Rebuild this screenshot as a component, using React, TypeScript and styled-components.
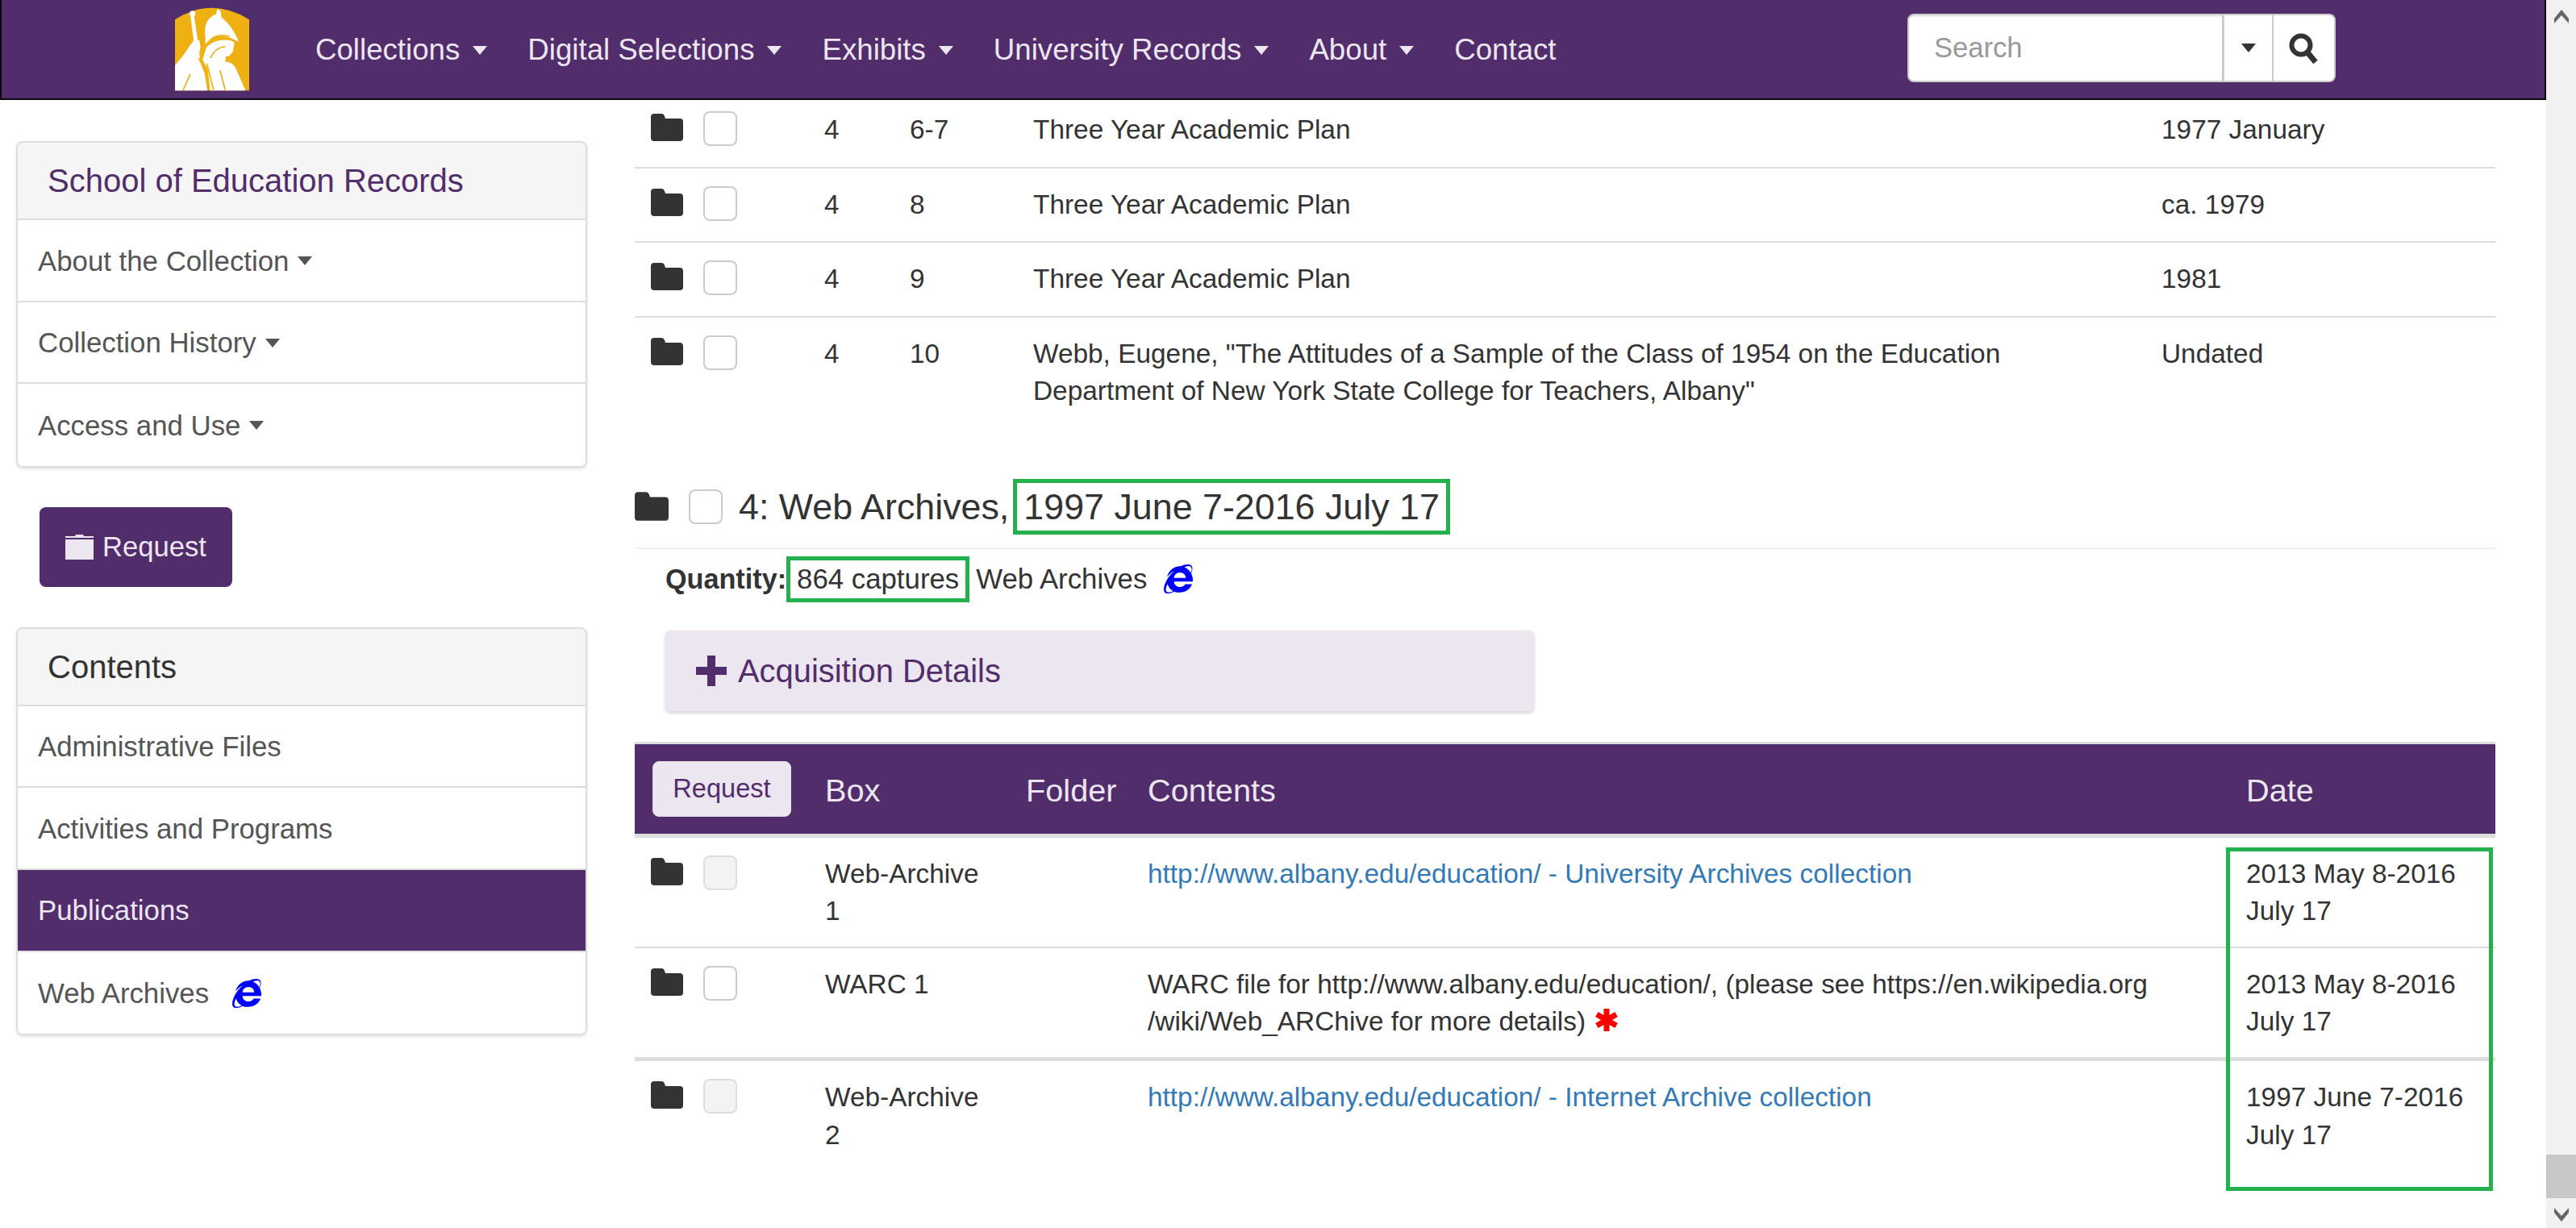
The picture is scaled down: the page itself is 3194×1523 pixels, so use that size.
import React from "react";
import styled, {createGlobalStyle} from "styled-components";
import {FaInternetExplorer} from "react-icons/fa";

const PURPLE = "#522d6b";
const LILAC = "#ebe6f0";
const LINE = "#dddddd";
const GREEN = "#22b14c";

const GlobalStyle = createGlobalStyle`
  html, body {
    margin: 0;
    height: 100%;
    overflow: hidden;
    background: #fff;
  }
  body {
    font-family: "Liberation Sans", Arial, sans-serif;
    font-size: 33.4px;
    line-height: 46.6px;
    color: #333;
  }
  * { box-sizing: border-box; }
`

const Screen = styled.div`
  display: flex;
  height: 1523px;
  overflow: hidden;
`
const Page = styled.div`
  flex: 1;
  min-width: 0;
  display: flex;
  flex-direction: column;
`
const Navbar = styled.nav`
  position: relative;
  z-index: 2;
  display: flex;
  align-items: flex-start;
  flex: none;
  height: 124px;
  background: ${PURPLE};
  border: 2px solid #0a0410;
  border-top: 0;
  padding-left: 215px;
`
const LogoBox = styled.div`
  width: 92px;
  height: 104px;
  margin-top: 9px;
  margin-right: 82px;
`
const NavMenu = styled.ul`
  display: flex;
  gap: 50px;
  list-style: none;
  margin: 0;
  padding: 37px 0 0;
  font-size: 36.67px;
  line-height: 50px;
  color: ${LILAC};
`
const NavItem = styled.li`
  display: flex;
  align-items: center;
`
const Caret = styled.span<{$color: string; $gap?: number}>`
  display: inline-block;
  width: 0;
  height: 0;
  margin-left: ${p => p.$gap ?? 16}px;
  border-left: 9.5px solid transparent;
  border-right: 9.5px solid transparent;
  border-top: 11px solid ${p => p.$color};
`
const SearchGroup = styled.div`
  display: flex;
  height: 85px;
  width: 531px;
  margin-left: auto;
  margin-right: 259px;
  margin-top: 17px;
  background: #fff;
  border: 2px solid #ccc;
  border-radius: 8px;
`
const SearchInput = styled.div`
  flex: 1;
  padding-left: 31px;
  font-size: 34.6px;
  line-height: 80px;
  color: #999;
  border-right: 3px solid #ccc;
  box-shadow: inset 0 2px 2px rgba(0, 0, 0, 0.08);
`
const SearchCaret = styled.div`
  width: 61px;
  display: flex;
  align-items: center;
  justify-content: center;
  border-right: 2px solid #ccc;
`
const SearchButton = styled.div`
  width: 75px;
  display: flex;
  align-items: center;
  justify-content: center;
`
const Columns = styled.div`
  flex: 1;
  display: flex;
  min-height: 0;
`
const Sidebar = styled.aside`
  flex: none;
  width: 708px;
  margin-left: 20px;
  padding-top: 51px;
  margin-right: 59px;
`
const Panel = styled.section`
  border: 2px solid ${LINE};
  border-radius: 8px;
  background: #fff;
  box-shadow: 0 2px 4px rgba(0, 0, 0, 0.1);
  overflow: hidden;
`
const PanelHeading = styled.h3<{$purple?: boolean}>`
  margin: 0;
  height: 96px;
  padding-left: 37px;
  background: #f5f5f5;
  font-size: 40px;
  line-height: 94px;
  font-weight: normal;
  color: ${p => (p.$purple ? PURPLE : "#333")};
  border-bottom: 2px solid ${LINE};
`
const PanelItem = styled.div<{$active?: boolean}>`
  display: flex;
  align-items: center;
  height: 101.6px;
  padding: 2px 0 0 25px;
  font-size: 34.8px;
  color: ${p => (p.$active ? LILAC : "#555")};
  background: ${p => (p.$active ? PURPLE : "#fff")};
  border-bottom: 2px solid ${LINE};
  &:last-child {
    border-bottom: 0;
  }
`
const SideRequest = styled.button`
  display: flex;
  align-items: center;
  gap: 11px;
  width: 239px;
  height: 99px;
  margin: 49px 0 50px 29px;
  padding: 0 0 0 32px;
  background: ${PURPLE};
  border: 0;
  border-radius: 8px;
  color: ${LILAC};
  font: inherit;
  font-size: 34.6px;
`
const IeIcon = styled(FaInternetExplorer)<{$gap: number}>`
  width: 36px;
  height: 36px;
  margin-left: ${p => p.$gap}px;
  color: #0000ff;
`
const Main = styled.main`
  flex: 1;
  min-width: 0;
  margin-right: 63px;
`
const ScrolledTable = styled.div`
  margin-top: -8px;
`
const Table = styled.table<{$padTop: number; $padBottom: number}>`
  width: 100%;
  table-layout: fixed;
  border-collapse: separate;
  border-spacing: 0;
  td {
    vertical-align: top;
    padding: ${p => p.$padTop}px 17px ${p => p.$padBottom}px;
    border-bottom: 2px solid ${LINE};
  }
  td:first-child {
    padding-left: 20px;
    padding-right: 0;
  }
  tbody tr:last-child td {
    border-bottom: 0;
  }
  a {
    color: #337ab7;
    text-decoration: none;
  }
`
const Col = styled.col<{$w: number}>`
  width: ${p => p.$w}px;
`
const ThickRow = styled.tr`
  td {
    border-bottom-width: 5px;
  }
`
const Controls = styled.div`
  display: flex;
  align-items: flex-start;
  gap: 25px;
`
const FolderSvg = styled.svg<{$large?: boolean}>`
  display: block;
  flex: none;
  width: ${p => (p.$large ? 42 : 40)}px;
  height: ${p => (p.$large ? 36 : 34)}px;
  margin-top: 3px;
`
const Check = styled.span<{$disabled?: boolean}>`
  display: block;
  flex: none;
  width: 42px;
  height: 43px;
  border: 2px solid #ccc;
  border-radius: 8px;
  background: ${p => (p.$disabled ? "#f3f3f3" : "#fff")};
  border-color: ${p => (p.$disabled ? "#dedede" : "#ccc")};
`
const SectionHeading = styled.h4`
  display: flex;
  align-items: center;
  margin: 63px 0 0;
  padding-bottom: 16px;
  font-size: 44.8px;
  line-height: 59px;
  font-weight: normal;
  border-bottom: 2px solid #eee;
`
const HeadingTitle = styled.span`
  margin-left: 20px;
`
const HeadingDate = styled.span`
  margin-left: 5px;
  padding: 0 8px;
  border: 5px solid ${GREEN};
`
const QuantityRow = styled.div`
  display: flex;
  align-items: center;
  margin: 9px 0 35px 38px;
  font-size: 34.8px;
`
const QuantityLabel = styled.strong`
  font-weight: bold;
  font-size: 34.2px;
`
const Captures = styled.span`
  padding: 0 8px;
  border: 5px solid ${GREEN};
  margin-right: 8px;
`
const Accordion = styled.div`
  display: flex;
  align-items: center;
  gap: 14px;
  width: 1077px;
  height: 100px;
  margin-left: 38px;
  margin-bottom: 38px;
  padding-left: 38px;
  background: ${LILAC};
  border-radius: 6px;
  box-shadow: 0 2px 4px rgba(0, 0, 0, 0.2);
  color: ${PURPLE};
  font-size: 39.9px;
  line-height: 52px;
`
const ResultsWrap = styled.div`
  position: relative;
  border-top: 3px solid ${LINE};
`
const HeadCell = styled.th`
  height: 116px;
  padding: 4px 17px 0;
  background: ${PURPLE};
  border-bottom: 5px solid ${LINE};
  color: ${LILAC};
  font-size: 39.7px;
  font-weight: normal;
  text-align: left;
  &:first-child {
    padding: 0 0 0 22px;
  }
`
const HeadRequest = styled.button`
  display: block;
  width: 172px;
  height: 69px;
  padding: 0;
  background: ${LILAC};
  border: 1px solid #ddd;
  border-radius: 8px;
  color: ${PURPLE};
  font: inherit;
  font-size: 32.6px;
`
const DateHighlight = styled.div`
  position: absolute;
  left: 1973px;
  top: 128px;
  width: 331px;
  height: 426px;
  border: 5px solid ${GREEN};
  pointer-events: none;
`
const Scrollbar = styled.div`
  flex: none;
  width: 37px;
  display: flex;
  flex-direction: column;
  align-items: center;
  background: #f1f1f1;
`
const ScrollSpacer = styled.div`
  flex: 1;
`
const ScrollThumb = styled.div`
  width: 100%;
  height: 54px;
  background: #c8c8c8;
`
const ScrollArrow = styled.svg`
  display: block;
  width: 18px;
  height: 17px;
  margin: 12px 0 8px;
  fill: #666;
`
const RedStar = styled.svg`
  display: inline-block;
  width: 28px;
  height: 28px;
  margin-left: 12px;
  vertical-align: -1px;
`

function Folder({large}: {large?: boolean}) {
    return (
        <FolderSvg $large={large} viewBox="0 0 40 34" fill="#333">
            <path d="M4 0h9c2.5 0 3.5 1.5 4 3l1 3h18c2.5 0 4 1.5 4 4v20c0 2.500-1.500 4-4 4H4c-2.500 0-4-1.500-4-4V4c0-2.500 1.500-4 4-4z"/>
        </FolderSvg>
    );
}

function Logo() {
    return (
        <svg width="92" height="104" viewBox="0 0 280 312">
            <path d="M0 44Q140 -44 280 44V312H0z" fill="#efb112"/>
            <g fill="#fff">
                <circle cx="66" cy="22" r="11"/>
                <path d="M58 28l14 0 14 95 22 187h-13L76 170 70 122z"/>
                <path d="M114 100C108 62 128 32 154 24L160 4l12 8 3 24c28 20 52 58 66 92l-36-16c-34-12-66-8-90 26z"/>
                <path d="M0 312V218C18 196 40 170 52 148L72 122l20 0 4 26-8 40 24 60 10 64z"/>
                <path d="M118 150C140 126 176 116 212 124l12 6-2 16-4 20-16 18-10-2-2 22c18 0 30 6 40 26l36 82H132L124 232 104 196z"/>
            </g>
            <g fill="none" stroke="#efb112" strokeWidth="5">
                <path d="M132 122C150 104 178 100 206 108"/>
                <path d="M134 190C146 160 170 148 190 146"/>
                <path d="M120 210L146 312"/>
                <path d="M170 236L190 312"/>
                <path d="M88 190L112 228"/>
                <path d="M30 312L58 250"/>
            </g>
        </svg>
    );
}

function RecordRow({box, folder, title, date}: {box: string; folder: string; title: string; date: string}) {
    return (
        <tr>
            <td>
                <Controls>
                    <Folder/>
                    <Check/>
                </Controls>
            </td>
            <td>{box}</td>
            <td>{folder}</td>
            <td>{title}</td>
            <td>{date}</td>
        </tr>
    );
}

function App() {
    const navItems = ["Collections", "Digital Selections", "Exhibits", "University Records", "About"];
    return (
        <Screen>
            <GlobalStyle/>
            <Page>
                <Navbar>
                    <LogoBox><Logo/></LogoBox>
                    <NavMenu>
                        {navItems.map(item => (
                            <NavItem key={item}>{item}<Caret $color={LILAC}/></NavItem>
                        ))}
                        <NavItem>Contact</NavItem>
                    </NavMenu>
                    <SearchGroup>
                        <SearchInput>Search</SearchInput>
                        <SearchCaret><Caret $color="#333" $gap={0}/></SearchCaret>
                        <SearchButton>
                            <svg width="38" height="38" viewBox="0 0 38 38" fill="none" stroke="#333">
                                <circle cx="15" cy="15" r="11.500" strokeWidth="6"/>
                                <path d="M23 24l10 12" strokeWidth="7"/>
                            </svg>
                        </SearchButton>
                    </SearchGroup>
                </Navbar>
                <Columns>
                    <Sidebar>
                        <Panel>
                            <PanelHeading $purple>School of Education Records</PanelHeading>
                            <PanelItem>About the Collection<Caret $color="#555" $gap={11}/></PanelItem>
                            <PanelItem>Collection History<Caret $color="#555" $gap={11}/></PanelItem>
                            <PanelItem>Access and Use<Caret $color="#555" $gap={11}/></PanelItem>
                        </Panel>
                        <SideRequest>
                            <svg width="35" height="31" viewBox="0 0 35 31" fill={LILAC}>
                                <path d="M0 2h12l1-2h9l1 2h12v2H0zM0 6h35v25H0z"/>
                            </svg>
                            Request
                        </SideRequest>
                        <Panel>
                            <PanelHeading>Contents</PanelHeading>
                            <PanelItem>Administrative Files</PanelItem>
                            <PanelItem>Activities and Programs</PanelItem>
                            <PanelItem $active>Publications</PanelItem>
                            <PanelItem>Web Archives<IeIcon $gap={29}/></PanelItem>
                        </Panel>
                    </Sidebar>
                    <Main>
                        <ScrolledTable>
                            <Table $padTop={22} $padBottom={22}>
                                <colgroup>
                                    <Col $w={218}/><Col $w={106}/><Col $w={153}/><Col $w={1399}/><Col $w={431}/>
                                </colgroup>
                                <tbody>
                                    <RecordRow box="4" folder="6-7" title="Three Year Academic Plan" date="1977 January"/>
                                    <RecordRow box="4" folder="8" title="Three Year Academic Plan" date="ca. 1979"/>
                                    <RecordRow box="4" folder="9" title="Three Year Academic Plan" date="1981"/>
                                    <RecordRow
                                        box="4"
                                        folder="10"
                                        title={'Webb, Eugene, "The Attitudes of a Sample of the Class of 1954 on the Education Department of New York State College for Teachers, Albany"'}
                                        date="Undated"
                                    />
                                </tbody>
                            </Table>
                        </ScrolledTable>
                        <SectionHeading>
                            <Controls>
                                <Folder large/>
                                <Check/>
                            </Controls>
                            <HeadingTitle>4: Web Archives,</HeadingTitle>
                            <HeadingDate>1997 June 7-2016 July 17</HeadingDate>
                        </SectionHeading>
                        <QuantityRow>
                            <QuantityLabel>Quantity:</QuantityLabel>
                            <Captures>864 captures</Captures>
                            Web Archives
                            <IeIcon $gap={21}/>
                        </QuantityRow>
                        <Accordion>
                            <svg width="38" height="38" viewBox="0 0 38 38" fill={PURPLE}>
                                <path d="M14 0h10v14h14v10H24v14H14V24H0V14h14z"/>
                            </svg>
                            <span>Acquisition Details</span>
                        </Accordion>
                        <ResultsWrap>
                            <Table $padTop={22} $padBottom={20}>
                                <colgroup>
                                    <Col $w={219}/><Col $w={249}/><Col $w={151}/><Col $w={1362}/><Col $w={326}/>
                                </colgroup>
                                <thead>
                                    <tr>
                                        <HeadCell><HeadRequest>Request</HeadRequest></HeadCell>
                                        <HeadCell>Box</HeadCell>
                                        <HeadCell>Folder</HeadCell>
                                        <HeadCell>Contents</HeadCell>
                                        <HeadCell>Date</HeadCell>
                                    </tr>
                                </thead>
                                <tbody>
                                    <tr>
                                        <td><Controls><Folder/><Check $disabled/></Controls></td>
                                        <td>Web-Archive 1</td>
                                        <td/>
                                        <td><a href="#">http://www.albany.edu/education/ - University Archives collection</a></td>
                                        <td>2013 May 8-2016 July 17</td>
                                    </tr>
                                    <ThickRow>
                                        <td><Controls><Folder/><Check/></Controls></td>
                                        <td>WARC 1</td>
                                        <td/>
                                        <td>
                                            WARC file for http://www.albany.edu/education/, (please see https://en.wikipedia.org<br/>
                                            /wiki/Web_ARChive for more details)
                                            <RedStar viewBox="0 0 28 28" fill="none" stroke="#ff0000" strokeWidth="7">
                                                <path d="M14 0v28M1.900 7l24.200 14M26.100 7L1.900 21"/>
                                            </RedStar>
                                        </td>
                                        <td>2013 May 8-2016 July 17</td>
                                    </ThickRow>
                                    <tr>
                                        <td><Controls><Folder/><Check $disabled/></Controls></td>
                                        <td>Web-Archive 2</td>
                                        <td/>
                                        <td><a href="#">http://www.albany.edu/education/ - Internet Archive collection</a></td>
                                        <td>1997 June 7-2016 July 17</td>
                                    </tr>
                                </tbody>
                            </Table>
                            <DateHighlight/>
                        </ResultsWrap>
                    </Main>
                </Columns>
            </Page>
            <Scrollbar>
                <ScrollArrow viewBox="0 0 18 17"><path d="M9 0l9 11v6L9 7 0 17v-6z"/></ScrollArrow>
                <ScrollSpacer/>
                <ScrollThumb/>
                <ScrollArrow viewBox="0 0 18 17"><path d="M9 17L0 6V0l9 10 9-10v6z"/></ScrollArrow>
            </Scrollbar>
        </Screen>
    );
}

export default App;
